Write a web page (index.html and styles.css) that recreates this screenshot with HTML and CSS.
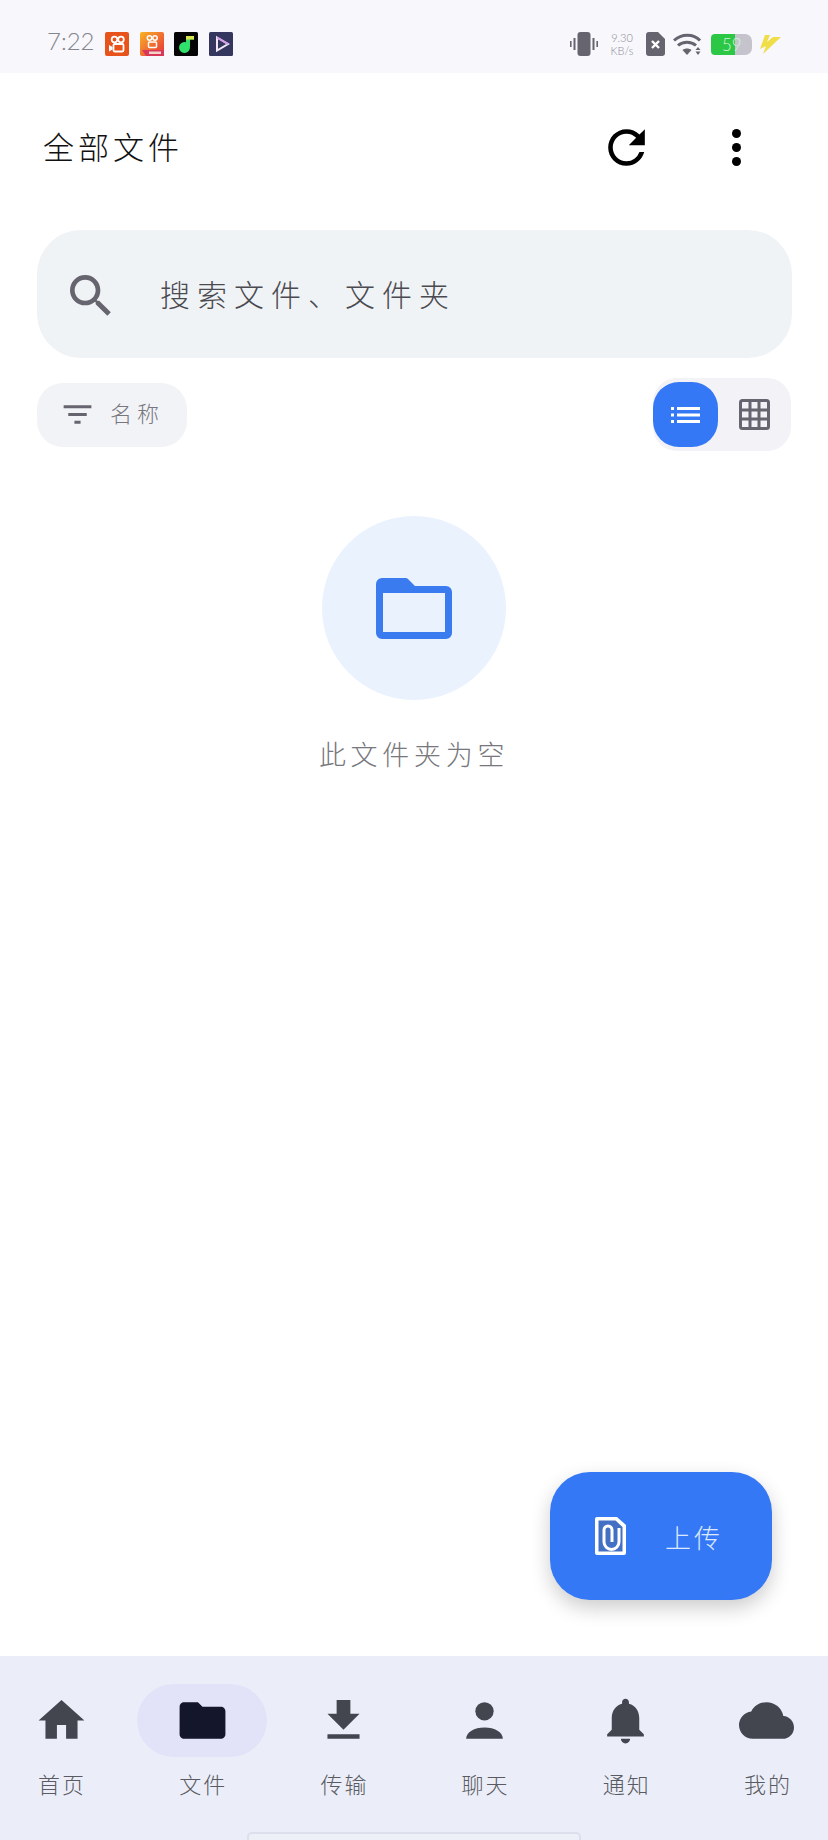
FILE: index.html
```html
<!DOCTYPE html>
<html lang="zh-CN">
<head>
    <meta charset="UTF-8">
    <meta name="viewport" content="width=device-width, initial-scale=1.0">
    <title>全部文件</title>
    <link rel="stylesheet" href="styles.css">
</head>
<body>
    <div class="page">
        <div class="status-bar">
            <div class="status-left">
                <span class="clock">7:22</span>
                <svg class="app-icon" viewBox="0 0 24 24"><rect width="24" height="24" rx="2" fill="#e8531c"/><g fill="none" stroke="#fff" stroke-width="1.800"><circle cx="9.500" cy="7.500" r="2.800"/><circle cx="16" cy="7.500" r="2.800"/><rect x="8.500" y="12" width="10" height="7.500" rx="1.200"/></g><path d="M4 13l3.500 2v2.500L4 19.500z" fill="#fff"/></svg>
                <svg class="app-icon" viewBox="0 0 24 24"><defs><linearGradient id="appGrad" x1="0" y1="0" x2="1" y2="1"><stop offset="0" stop-color="#f9b324"/><stop offset="1" stop-color="#e8303c"/></linearGradient></defs><rect width="24" height="24" rx="2" fill="url(#appGrad)"/><g fill="none" stroke="#fff" stroke-width="1.500"><circle cx="9.500" cy="6" r="2.200"/><circle cx="15" cy="6" r="2.200"/><rect x="8.500" y="10" width="8" height="5.500" rx="1"/></g><path d="M2 18h22v6H6z" fill="#d8375a"/><rect x="9" y="19.500" width="12" height="2.500" fill="#f4d4c8"/></svg>
                <svg class="app-icon" viewBox="0 0 24 24"><rect width="24" height="24" rx="1.500" fill="#050505"/><path d="M12 4h8v3.500h-4V15a5.500 5.500 0 1 1-4-4.800z" fill="#2fe06a"/><path d="M12 4h8v3.500h-8z" fill="#d8e84c"/></svg>
                <svg class="app-icon" viewBox="0 0 24 24"><rect width="24" height="24" rx="1.500" fill="#36375f"/><path d="M8 5.500l11 6.500-11 6.500z" fill="none" stroke="#f2e8f6" stroke-width="2"/><path d="M8 5.500l11 6.500" stroke="#d79be8" stroke-width="2"/></svg>
            </div>
            <div class="status-right">
                <svg class="vibrate" viewBox="0 0 28 24" fill="#66656f"><rect x="7.500" y="0" width="13" height="24" rx="3"/><rect x="3.500" y="6" width="2" height="12"/><rect x="22.500" y="6" width="2" height="12"/><rect x="0" y="9" width="1.600" height="6"/><rect x="26.400" y="9" width="1.600" height="6"/></svg>
                <div class="net-speed"><span>9.30</span><span>KB/s</span></div>
                <svg class="sim" viewBox="0 0 19 24"><path d="M3 0h9l7 7v14a3 3 0 0 1-3 3H3a3 3 0 0 1-3-3V3a3 3 0 0 1 3-3z" fill="#66656f"/><path d="M6 9l7 7M13 9l-7 7" stroke="#fff" stroke-width="2.400"/></svg>
                <svg class="wifi" viewBox="0 0 29 22"><g fill="none" stroke="#66656f" stroke-width="3"><path d="M1 7.500c7.500-7 19.500-7 26 0"/><path d="M5 12.500c5-4.500 13-4.500 18 0"/></g><path d="M14 22l-4.500-5c2.500-2 6.500-2 9 0z" fill="#66656f"/><path d="M25 14l2.500 3h-5zM22.500 18.500h5L25 22z" fill="#66656f"/></svg>
                <div class="battery">59</div>
                <svg class="bolt" viewBox="0 0 22 19" fill="#f0de48"><path d="M6 0h5L8 7l6-5h8L4 19l3-8-6 3z"/></svg>
            </div>
        </div>

        <div class="main">
            <div class="header">
                <h1 class="title">全部文件</h1>
                <div class="header-actions">
                    <svg class="refresh-icon" viewBox="0 0 24 24"><path d="M17.65 6.35A7.958 7.958 0 0 0 12 4c-4.42 0-7.99 3.580-7.99 8s3.570 8 7.990 8c3.730 0 6.840-2.550 7.730-6h-2.080A5.990 5.990 0 0 1 12 18c-3.310 0-6-2.690-6-6s2.690-6 6-6c1.660 0 3.140.69 4.220 1.780L13 11h7V4l-2.350 2.350z"/></svg>
                    <div class="more-btn"><span></span><span></span><span></span></div>
                </div>
            </div>

            <div class="search-box">
                <svg class="search-icon" viewBox="0 0 24 24"><path d="M15.5 14h-.79l-.28-.27A6.471 6.471 0 0 0 16 9.500 6.500 6.500 0 1 0 9.500 16c1.610 0 3.090-.59 4.230-1.570l.27.28v.79l5 4.990L20.490 19l-4.990-5zm-6 0C7.010 14 5 11.990 5 9.500S7.010 5 9.500 5 14 7.010 14 9.500 11.990 14 9.500 14z"/></svg>
                <span class="search-text">搜索文件、文件夹</span>
            </div>

            <div class="toolbar">
                <div class="sort-btn">
                    <svg class="sort-icon" viewBox="0 0 24 24"><path d="M10 18h4v-2h-4v2zM3 6v2h18V6H3zm3 7h12v-2H6v2z"/></svg>
                    <span>名称</span>
                </div>
                <div class="view-toggle">
                    <div class="view-btn active">
                        <svg class="list-icon" viewBox="0 0 29 16" fill="#fff"><rect x="0" y="0" width="3" height="3"/><rect x="6" y="0" width="23" height="3"/><rect x="0" y="6.500" width="3" height="3"/><rect x="6" y="6.500" width="23" height="3"/><rect x="0" y="13" width="3" height="3"/><rect x="6" y="13" width="23" height="3"/></svg>
                    </div>
                    <div class="view-btn">
                        <svg class="grid-icon" viewBox="0 0 31 31" fill="none" stroke="#66656f" stroke-width="3"><rect x="1.500" y="1.500" width="28" height="28" rx="2"/><path d="M11 1.500v28M20 1.500v28M1.500 11h28M1.500 20h28"/></svg>
                    </div>
                </div>
            </div>

            <div class="empty">
                <div class="empty-circle">
                    <svg class="empty-folder" viewBox="0 0 76 61"><path fill-rule="evenodd" d="M6 0h23a4 4 0 0 1 3 1l7 7h31a6 6 0 0 1 6 6v41a6 6 0 0 1-6 6H6a6 6 0 0 1-6-6V6a6 6 0 0 1 6-6zM7 15v39h62V15z"/></svg>
                </div>
                <p class="empty-text">此文件夹为空</p>
            </div>

            <div class="fab">
                <svg class="fab-icon" viewBox="0 0 31 38"><path d="M2 0h20l9 8v28a2 2 0 0 1-2 2H2a2 2 0 0 1-2-2V2a2 2 0 0 1 2-2z" fill="#fff"/><path d="M3.500 3.500h17l7 6.500v24.500h-24z" fill="#4370c4"/><path d="M24 11v14a7.500 7.500 0 0 1-15 0V13a4 4 0 0 1 8 0v12" fill="none" stroke="#fff" stroke-width="3"/></svg>
                <span>上传</span>
            </div>
        </div>

        <div class="bottom-nav">
            <div class="nav-row">
                <div class="nav-item">
                    <div class="nav-icon"><svg viewBox="0 0 24 24"><path d="M10 20v-6h4v6h5v-8h3L12 3 2 12h3v8z"/></svg></div>
                    <span>首页</span>
                </div>
                <div class="nav-item active">
                    <div class="nav-icon"><svg viewBox="0 0 24 24"><path d="M10 4H4c-1.100 0-1.990.9-1.990 2L2 18c0 1.100.9 2 2 2h16c1.100 0 2-.9 2-2V8c0-1.100-.9-2-2-2h-8l-2-2z"/></svg></div>
                    <span>文件</span>
                </div>
                <div class="nav-item">
                    <div class="nav-icon"><svg viewBox="0 0 24 24"><path d="M19 9h-4V3H9v6H5l7 7 7-7zM5 18v2h14v-2H5z"/></svg></div>
                    <span>传输</span>
                </div>
                <div class="nav-item">
                    <div class="nav-icon"><svg viewBox="0 0 24 24"><circle cx="12" cy="8" r="4"/><path d="M4 20c0-3 3.500-5 8-5s8 2 8 5z"/></svg></div>
                    <span>聊天</span>
                </div>
                <div class="nav-item">
                    <div class="nav-icon"><svg viewBox="0 0 24 24"><path d="M12 22c1.100 0 2-.9 2-2h-4a2 2 0 0 0 2 2zm6-6v-5c0-3.070-1.630-5.640-4.500-6.320V4c0-.83-.67-1.500-1.500-1.500s-1.500.67-1.500 1.500v.68C7.640 5.360 6 7.920 6 11v5l-2 2v1h16v-1l-2-2z"/></svg></div>
                    <span>通知</span>
                </div>
                <div class="nav-item">
                    <div class="nav-icon"><svg viewBox="0 0 24 24"><path d="M19.350 10.040A7.490 7.490 0 0 0 12 4C9.110 4 6.600 5.640 5.350 8.040A5.994 5.994 0 0 0 0 14c0 3.310 2.690 6 6 6h13c2.760 0 5-2.240 5-5 0-2.640-2.050-4.780-4.650-4.960z"/></svg></div>
                    <span>我的</span>
                </div>
            </div>
            <div class="home-indicator"></div>
        </div>
    </div>
</body>
</html>
```

FILE: styles.css
```css
* {
    box-sizing: border-box;
}

body {
    margin: 0;
    background: #fff;
    font-family: "Noto Sans CJK SC", "Noto Sans", sans-serif;
    font-weight: 300;
    overflow: hidden;
}

.page {
    display: flex;
    flex-direction: column;
    height: 1840px;
    overflow: hidden;
}

/* status bar */
.status-bar {
    display: flex;
    justify-content: space-between;
    align-items: center;
    height: 73px;
    padding: 15px 47px 0 47px;
    background: #f7f7fc;
}

.status-left,
.status-right {
    display: flex;
    align-items: center;
}

.clock {
    width: 58px;
    padding-bottom: 8px;
    font-family: "Lato", sans-serif;
    font-weight: 300;
    font-size: 24px;
    color: #85858d;
}

.app-icon {
    width: 24px;
    height: 24px;
    margin-right: 10.500px;
}

.vibrate {
    width: 28px;
    height: 24px;
}

.net-speed {
    display: flex;
    flex-direction: column;
    align-items: center;
    width: 24px;
    margin: 0 12px;
    font-family: "Lato", sans-serif;
    font-size: 11px;
    line-height: 13px;
    color: #8c8c94;
}

.sim {
    width: 19px;
    height: 24px;
    margin-right: 8px;
}

.wifi {
    width: 29px;
    height: 22px;
    margin-right: 9px;
}

.battery {
    width: 41px;
    height: 21px;
    margin-right: 7px;
    padding-left: 11px;
    border-radius: 4px 7px 7px 4px;
    background: linear-gradient(90deg, #2cc845 24px, #c5c4cc 24px);
    font-family: "Lato", sans-serif;
    font-size: 17px;
    line-height: 21px;
    color: #d0f3d6;
}

.bolt {
    width: 22px;
    height: 19px;
}

/* main area */
.main {
    position: relative;
    flex: 1;
}

.header {
    display: flex;
    justify-content: space-between;
    align-items: center;
    height: 148px;
    padding: 0 87px 0 43px;
}

.title {
    margin: 0;
    padding-bottom: 4px;
    font-size: 31px;
    font-weight: 300;
    letter-spacing: 4px;
    color: #111;
}

.header-actions {
    display: flex;
    align-items: center;
    gap: 78px;
}

.refresh-icon {
    width: 55px;
    height: 55px;
    fill: #000;
}

.more-btn {
    display: flex;
    flex-direction: column;
    gap: 5px;
}

.more-btn span {
    width: 9px;
    height: 9px;
    border-radius: 50%;
    background: #000;
}

.search-box {
    display: flex;
    align-items: center;
    gap: 41px;
    height: 128px;
    margin: 9px 36px 0 37px;
    padding-left: 26px;
    border-radius: 44px;
    background: #f0f3f6;
}

.search-icon {
    width: 56px;
    height: 56px;
    margin-top: 4px;
    fill: #66656f;
}

.search-text {
    padding-bottom: 2px;
    font-size: 30px;
    letter-spacing: 7px;
    color: #4a4a50;
}

.toolbar {
    display: flex;
    justify-content: space-between;
    align-items: center;
    margin-top: 20px;
    padding: 0 37px;
}

.sort-btn {
    display: flex;
    align-items: center;
    gap: 14px;
    width: 150px;
    height: 64px;
    padding-left: 22px;
    border-radius: 26px;
    background: #f2f3f7;
    font-size: 22px;
    letter-spacing: 5px;
    color: #77777d;
}

.sort-btn span {
    padding-bottom: 6px;
}

.sort-icon {
    width: 37px;
    height: 37px;
    fill: #66656f;
}

.view-toggle {
    display: flex;
    align-items: center;
    width: 138px;
    height: 73px;
    border-radius: 24px;
    background: #f2f2f7;
}

.view-btn {
    display: flex;
    justify-content: center;
    align-items: center;
    width: 73px;
    height: 65px;
}

.view-btn.active {
    width: 65px;
    border-radius: 26px;
    background: #3578f6;
}

.list-icon {
    width: 29px;
    height: 16px;
}

.grid-icon {
    width: 31px;
    height: 31px;
}

/* empty state */
.empty {
    display: flex;
    flex-direction: column;
    align-items: center;
    margin-top: 65px;
}

.empty-circle {
    display: flex;
    justify-content: center;
    align-items: center;
    width: 184px;
    height: 184px;
    border-radius: 50%;
    background: #eaf2fe;
}

.empty-folder {
    width: 76px;
    height: 61px;
    fill: #3b7bf0;
}

.empty-text {
    margin: 34px 0 0;
    font-size: 27px;
    line-height: 40px;
    letter-spacing: 4.700px;
    color: #77777d;
}

.fab {
    position: absolute;
    right: 56px;
    bottom: 56px;
    display: flex;
    align-items: center;
    gap: 39px;
    width: 222px;
    height: 128px;
    padding-left: 45px;
    border-radius: 40px;
    background: #3578f6;
    box-shadow: 0 8px 20px rgba(0, 0, 0, 0.2);
    font-size: 26px;
    letter-spacing: 3px;
    color: #dbe8fd;
}

.fab-icon {
    width: 31px;
    height: 38px;
}

/* bottom nav */
.bottom-nav {
    display: flex;
    flex-direction: column;
    align-items: center;
    height: 184px;
    padding-top: 28px;
    background: #ebeef8;
}

.nav-row {
    display: grid;
    grid-template-columns: repeat(6, 141.200px);
    justify-content: center;
    width: 100%;
}

.nav-item {
    display: flex;
    flex-direction: column;
    align-items: center;
    font-size: 22px;
    line-height: 30px;
    letter-spacing: 2px;
    color: #5a5a62;
}

.nav-item span {
    margin-top: 11px;
    padding-left: 2px;
}

.nav-icon {
    display: flex;
    justify-content: center;
    align-items: center;
    width: 130px;
    height: 73px;
    border-radius: 37px;
}

.nav-icon svg {
    width: 55px;
    height: 55px;
    fill: #43454f;
}

.nav-item.active .nav-icon {
    background: #e2e3f9;
}

.nav-item.active .nav-icon svg {
    fill: #14162b;
}

.home-indicator {
    width: 334px;
    height: 8px;
    margin-top: auto;
    border: 2px solid #dde0ec;
    border-bottom: none;
    border-radius: 5px 5px 0 0;
    background: #eef0f8;
}
```
